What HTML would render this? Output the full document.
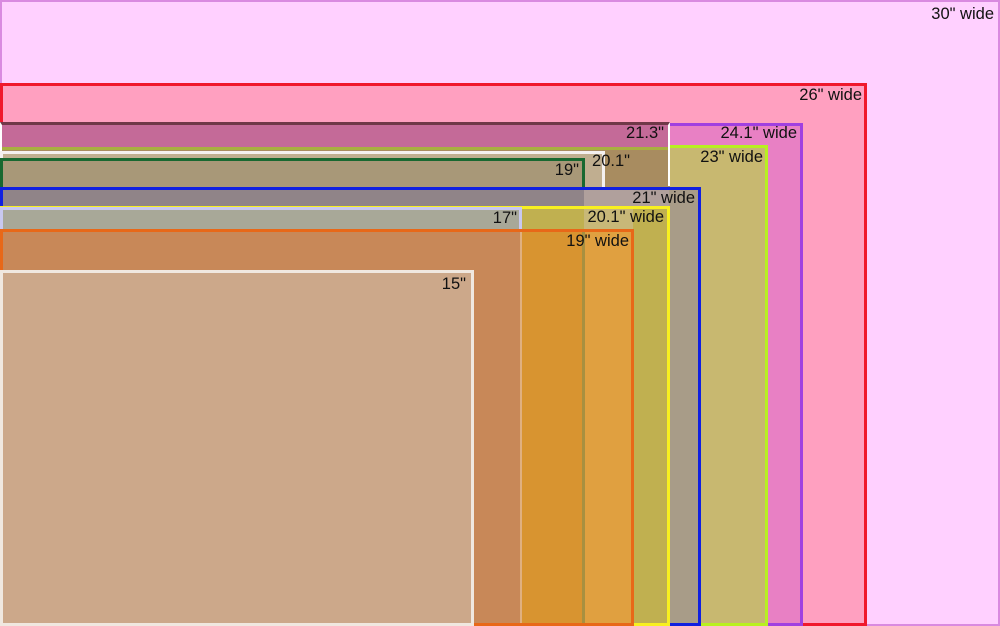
<!DOCTYPE html>
<html style="margin:0;width:1000px;height:626px;overflow:hidden"><head><meta charset="utf-8"><style>
body{margin:0;width:1000px;height:626px;overflow:hidden;position:relative;background:#ffd0ff;font-family:"Liberation Sans",Arial,sans-serif}
div{position:absolute;box-sizing:border-box}
.r{left:0;bottom:0}
.t{font-size:16.5px;line-height:18px;color:#111;white-space:nowrap;text-align:right;width:120px}
</style></head><body>
<div class="r" style="top:0;width:1000px;border:2px solid #d98ae0;background:#ffd0ff"></div>
<div class="r" style="top:83px;width:867px;border:3px solid #f0182c;background:#ffa0c0"></div>
<div class="r" style="top:123px;width:803px;border:3px solid #a040e0;background:#e880c4"></div>
<div class="r" style="top:145px;width:768px;border:3px solid #b8f020;background:#c8b870"></div>
<div style="left:0;top:122px;width:670px;border-top:3px solid #703848;border-right:2px solid #fff;border-left:2px solid #fff;background:linear-gradient(#c46a98 0,#c46a98 22px,#a8b040 22px,#a8b040 25px,#a88c60 25px);height:64px"></div>
<div style="left:0;top:186px;width:670px;background:#a88c60;height:30px"></div>
<div class="r" style="top:151px;width:605px;border:3px solid #f4f0f0;background:#c0ae90"></div>
<div class="r" style="top:158px;width:585px;border:3px solid #186830;background:#a89878"></div>
<div class="r" style="top:187px;width:701px;border:3px solid #1020e0;background:#a89c88"></div>
<div style="left:3px;top:190px;width:581px;height:17px;background:#908488"></div>
<div style="left:584px;top:190px;width:85px;height:17px;background:#b0a09c"></div>
<div class="r" style="top:206px;width:670px;border:3px solid #f8f020;background:#c0b050"></div>
<div style="left:584px;top:209px;width:49px;height:21px;background:#c8b878"></div>
<div class="r" style="top:207px;width:522px;border:3px solid #c8c8f0;background:#a8a898"></div>
<div class="r" style="top:229px;width:634px;border:3px solid #e86818;background:#c88858"></div>
<div style="left:521px;top:232px;width:63px;bottom:3px;background:#d89430"></div>
<div style="left:584px;top:232px;width:47px;bottom:3px;background:#e0a040"></div>
<div style="left:582px;top:232px;width:3px;bottom:3px;background:#a89040"></div>
<div style="left:520px;top:232px;width:2px;bottom:3px;background:#e0b080"></div>
<div class="r" style="top:270px;width:474px;border:3px solid #f0e8e0;background:#cca88a"></div>

<div class="t" style="right:6px;top:5px">30" wide</div>
<div class="t" style="left:742px;top:86px">26" wide</div>
<div class="t" style="left:544px;top:124px">21.3"</div>
<div class="t" style="left:677px;top:124px">24.1" wide</div>
<div class="t" style="left:643px;top:148px">23" wide</div>
<div class="t" style="left:510px;top:152px">20.1"</div>
<div class="t" style="left:459px;top:161px">19"</div>
<div class="t" style="left:575px;top:189px">21" wide</div>
<div class="t" style="left:397px;top:209px">17"</div>
<div class="t" style="left:544px;top:208px">20.1" wide</div>
<div class="t" style="left:509px;top:232px">19" wide</div>
<div class="t" style="left:346px;top:275px">15"</div>
</body></html>
